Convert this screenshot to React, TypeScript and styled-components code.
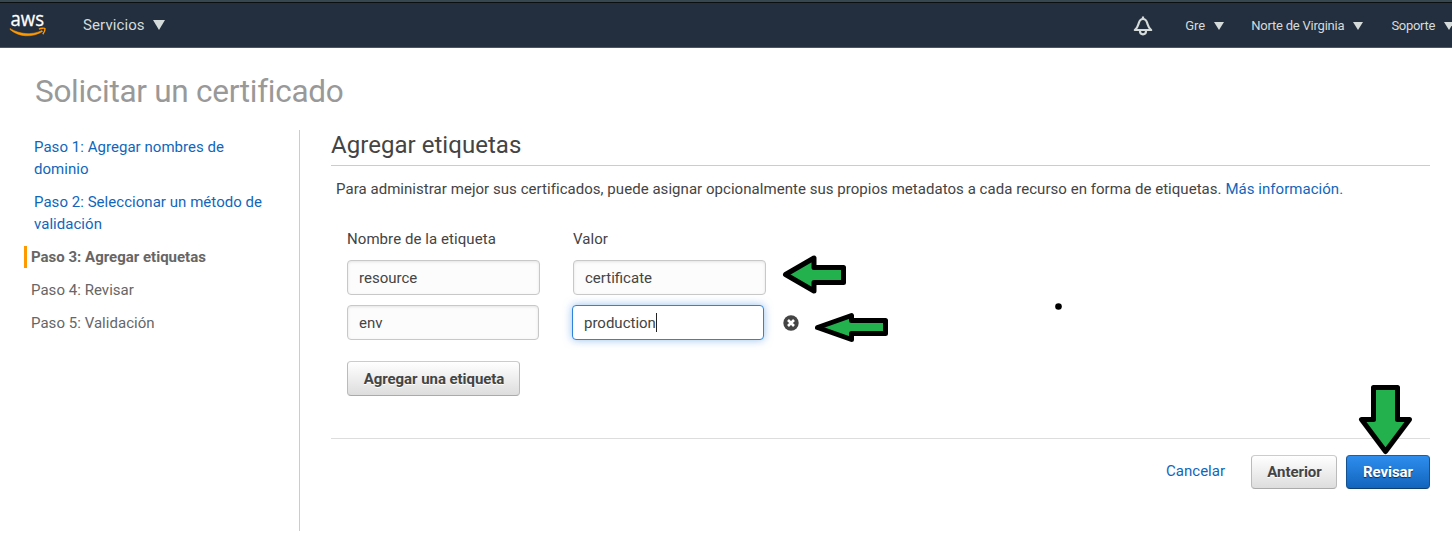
import React from "react";
import styled, { createGlobalStyle } from "styled-components";

const GlobalStyle = createGlobalStyle`
  *, *::before, *::after { box-sizing: border-box; }
  body {
    margin: 0;
    background: #fff;
    color: #444;
    font-family: Roboto, "Liberation Sans", sans-serif;
    font-size: 15px;
    line-height: 22px;
    overflow: hidden;
  }
  button { font: inherit; color: inherit; }
`;

const Page = styled.div`
  position: relative;
  width: 1452px;
  height: 553px;
  overflow: hidden;
`;

const TopBar = styled.header`
  display: flex;
  align-items: center;
  height: 48px;
  padding: 3px 0 0 9px;
  background: #232f3e;
  border-bottom: 1px solid #4b5563;
  box-shadow: inset 0 2px #37474f, inset 0 3px #0c0f12;
  color: #d5dbdb;
`;

const Logo = styled.svg`
  width: 38px;
  height: 30px;
  margin-right: 36px;
  overflow: visible;
`;

const LogoWord = styled.text`
  font: 400 20px/1 "Open Sans", sans-serif;
  fill: #fff;
  stroke: #fff;
  stroke-width: 0.3;
`;

const NavItem = styled.a<{ $size: number; $gap: number; $left?: number; $spacing?: number }>`
  display: flex;
  align-items: center;
  gap: ${(p) => p.$gap}px;
  margin-left: ${(p) => p.$left ?? 0}px;
  font-size: ${(p) => p.$size}px;
  letter-spacing: ${(p) => p.$spacing ?? 0}px;
  white-space: nowrap;
`;

const NavRight = styled.nav`
  display: flex;
  align-items: center;
  margin-left: auto;
  margin-right: -2px;
  padding-top: 2px;
`;

const Caret = styled.svg<{ $w: number; $h: number }>`
  width: ${(p) => p.$w}px;
  height: ${(p) => p.$h}px;
  fill: #d5dbdb;
  flex: none;
`;

const Title = styled.h1`
  margin: 0;
  padding: 24px 0 0 35px;
  height: 82px;
  font-size: 31.5px;
  line-height: 40px;
  font-weight: 400;
  letter-spacing: -0.28px;
  color: #999;
`;

const Body = styled.div`
  display: flex;
  padding: 0 22px 0 24px;
`;

const Steps = styled.ol`
  list-style: none;
  display: flex;
  flex-direction: column;
  gap: 11px;
  width: 276px;
  height: 401px;
  margin: 0;
  padding: 6px 30px 0 0;
  border-right: 1px solid #ccc;
`;

const Step = styled.li<{ $state: "link" | "current" | "todo" }>`
  padding-left: ${(p) => (p.$state === "link" ? 10 : p.$state === "current" ? 4 : 7)}px;
  border-left: ${(p) => (p.$state === "current" ? "3px solid #f90" : "0")};
  color: ${(p) => (p.$state === "link" ? "#1166bb" : "#666")};
  font-weight: ${(p) => (p.$state === "current" ? 700 : 400)};
  letter-spacing: ${(p) => (p.$state === "current" ? 0 : 0.04)}px;
`;

const Main = styled.main`
  flex: 1;
  margin-left: 31px;
`;

const Heading = styled.h2`
  margin: 0;
  height: 36px;
  border-bottom: 1px solid #ccc;
  font-size: 24px;
  line-height: 30px;
  font-weight: 400;
  letter-spacing: 0.04px;
`;

const Intro = styled.p`
  margin: 0;
  padding: 12px 0 0 5px;
  letter-spacing: 0.043px;
  white-space: nowrap;
`;

const Link = styled.a`
  color: #1166bb;
`;

const Form = styled.section`
  padding: 28px 0 42px 16px;
  border-bottom: 1px solid #ddd;
`;

const Labels = styled.div`
  display: grid;
  grid-template-columns: 226px 193px;
  height: 32px;
  letter-spacing: 0.07px;
`;

const TagRow = styled.div<{ $field: number }>`
  display: grid;
  grid-template-columns: ${(p) => p.$field}px ${(p) => p.$field}px 16px;
  column-gap: 33px;
  align-items: center;
  margin-bottom: 10px;
`;

const Field = styled.div<{ $focused?: boolean }>`
  display: flex;
  align-items: center;
  height: 35px;
  padding: 0 11px;
  border: 1px solid ${(p) => (p.$focused ? "#2d84dd" : "#c8c8c8")};
  border-radius: 4px;
  background: ${(p) => (p.$focused ? "#fff" : "#fcfcfc")};
  box-shadow: ${(p) =>
    p.$focused ? "0 0 8px rgba(45, 132, 221, 0.5)" : "inset 0 1px 3px rgba(0, 0, 0, 0.1)"};
`;

const TextCursor = styled.span`
  width: 1px;
  height: 19px;
  background: #222;
`;

const RemoveIcon = styled.svg`
  width: 16px;
  height: 16px;
  margin-left: -14px;
`;

const Button = styled.button<{ $primary?: boolean; $width: number; $height?: number }>`
  width: ${(p) => p.$width}px;
  height: ${(p) => p.$height ?? 34}px;
  padding: 0 0 0 ${(p) => (p.$primary ? 0 : 1)}px;
  border: 1px solid;
  border-color: ${(p) => (p.$primary ? "#1c5fa8 #15508f #0e3f73" : "#ccc #bbb #aaa")};
  border-radius: 4px;
  background: ${(p) =>
    p.$primary
      ? "linear-gradient(#2e8ded, #1265bd)"
      : "linear-gradient(#fff, #ddd)"};
  color: ${(p) => (p.$primary ? "#fff" : "#444")};
  font-weight: 700;
  letter-spacing: -0.06px;
  text-shadow: ${(p) => (p.$primary ? "0 1px 1px rgba(0,0,0,0.6)" : "0 1px 0 #fff")};
`;

const AddRow = styled.div`
  padding-top: 11px;
`;

const Footer = styled.footer`
  display: flex;
  justify-content: flex-end;
  gap: 9px;
  padding-top: 16px;
`;

const Cancel = styled(Link)`
  margin: 5px 17px 0 0;
`;

const Mark = styled.svg<{ $x: number; $y: number }>`
  position: absolute;
  left: ${(p) => p.$x}px;
  top: ${(p) => p.$y}px;
  fill: #22b14c;
  stroke: #000;
  stroke-width: 5;
  stroke-linejoin: round;
`;

const Down = ({ w, h }: { w: number; h: number }) => (
  <Caret $w={w} $h={h} viewBox="0 0 11 9" preserveAspectRatio="none">
    <path d="M0 0H11L5.5 9Z" />
  </Caret>
);

const Bell = () => (
  <svg width="20" height="20" viewBox="0 0 20 20" fill="none" stroke="#d5dbdb" strokeWidth="2.2">
    <path d="M10 0.500V3" />
    <path d="M1.800 14C5 11.500 5 9.500 5.800 7C6.600 4.300 8 3 10 3S13.400 4.300 14.200 7C15 9.500 15 11.500 18.200 14Z" strokeLinejoin="round" />
    <path d="M7 14V15.300A3 3 0 0 0 13 15.300V14" />
  </svg>
);

export default function App() {
  return (
    <Page>
      <GlobalStyle />
      <TopBar>
        <Logo viewBox="0 0 38 30">
          <LogoWord x="1.500" y="15.500" textLength="33.500" lengthAdjust="spacingAndGlyphs">aws</LogoWord>
          <path d="M1 18.500C10 24 22 25.800 33 20.500L33.500 21.500C23 28 9.500 27 1 19.500Z" fill="#f90" stroke="#f90" strokeWidth="0.500" />
          <path d="M30 19.200C32 18 35.500 17.900 36 18.700C36.200 20 35.300 22.500 33.800 24.300" fill="none" stroke="#f90" strokeWidth="1.400" />
        </Logo>
        <NavItem $size={15} $gap={8} $spacing={0.1}>
          Servicios <Down w={12} h={10} />
        </NavItem>
        <NavRight>
          <Bell />
          <NavItem $size={13} $gap={9} $left={32}>
            Gre <Down w={10} h={8} />
          </NavItem>
          <NavItem $size={13} $gap={9} $left={27} $spacing={-0.22}>
            Norte de Virginia <Down w={10} h={8} />
          </NavItem>
          <NavItem $size={13} $gap={9} $left={28} $spacing={-0.3}>
            Soporte <Down w={10} h={8} />
          </NavItem>
        </NavRight>
      </TopBar>
      <Title>Solicitar un certificado</Title>
      <Body>
        <Steps>
          <Step $state="link">Paso 1: Agregar nombres de dominio</Step>
          <Step $state="link">Paso 2: Seleccionar un método de validación</Step>
          <Step $state="current">Paso 3: Agregar etiquetas</Step>
          <Step $state="todo">Paso 4: Revisar</Step>
          <Step $state="todo">Paso 5: Validación</Step>
        </Steps>
        <Main>
          <Heading>Agregar etiquetas</Heading>
          <Intro>
            Para administrar mejor sus certificados, puede asignar opcionalmente sus propios metadatos a cada
            recurso en forma de etiquetas. <Link>Más información.</Link>
          </Intro>
          <Form>
            <Labels>
              <span>Nombre de la etiqueta</span>
              <span>Valor</span>
            </Labels>
            <TagRow $field={193}>
              <Field>resource</Field>
              <Field>certificate</Field>
            </TagRow>
            <TagRow $field={192}>
              <Field>env</Field>
              <Field $focused>
                production
                <TextCursor />
              </Field>
              <RemoveIcon viewBox="0 0 16 16">
                <circle cx="8" cy="8" r="7.700" fill="#444" />
                <path d="M5 5L11 11M11 5L5 11" stroke="#fff" strokeWidth="2.600" />
              </RemoveIcon>
            </TagRow>
            <AddRow>
              <Button $width={173} $height={35}>Agregar una etiqueta</Button>
            </AddRow>
          </Form>
          <Footer>
            <Cancel>Cancelar</Cancel>
            <Button $width={86}>Anterior</Button>
            <Button $primary $width={84}>Revisar</Button>
          </Footer>
        </Main>
      </Body>
      <Mark $x={780} $y={250} width="70" height="48">
        <path d="M5.500 24.500L34 8V17.500H63.500V32.500H34V41Z" />
      </Mark>
      <Mark $x={812} $y={308} width="80" height="40">
        <path d="M5.500 19.500L39.500 7.500V12.500H73.500V25.500H39.500V31.500Z" />
      </Mark>
      <Mark $x={1355} $y={380} width="60" height="78">
        <path d="M18.500 7.500H42.500V39.500H54.500L30.500 71.500L6.500 39.500H18.500Z" />
      </Mark>
      <Mark $x={1054} $y={302} width="9" height="9">
        <circle cx="4.500" cy="4.500" r="3.300" fill="#000" stroke="none" />
      </Mark>
    </Page>
  );
}
